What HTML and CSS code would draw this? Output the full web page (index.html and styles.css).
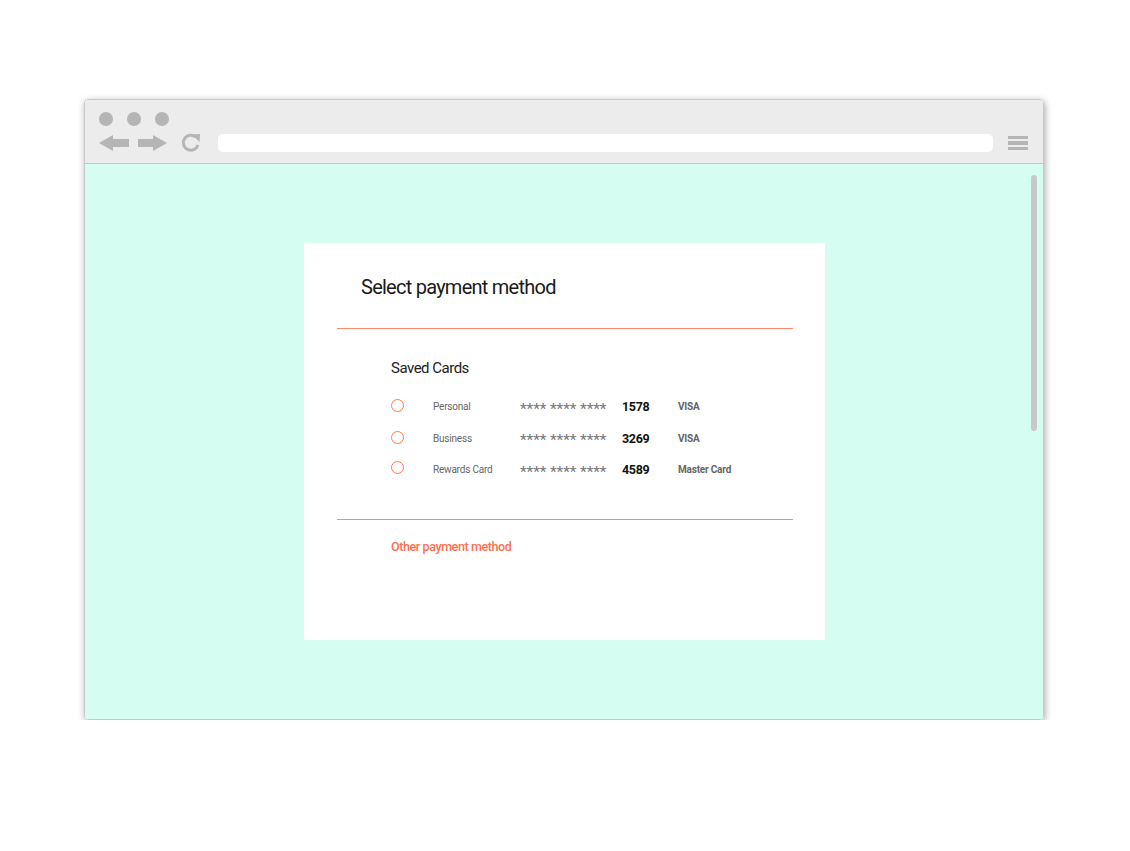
FILE: index.html
```html
<!DOCTYPE html>
<html>
<head>
<meta charset="utf-8">
<link rel="stylesheet" href="styles.css">
</head>
<body>
<div class="window">
  <div class="toolbar">
    <div class="dots"><span class="dot"></span><span class="dot"></span><span class="dot"></span></div>
    <div class="navrow">
      <svg class="nav" width="110" height="22" viewBox="0 0 110 22">
        <polygon points="0,10 14,2 14,6 30,6 30,14 14,14 14,18" fill="#b5b5b5" transform="translate(0,1)"/>
        <polygon points="68,10 54,2 54,6 39,6 39,14 54,14 54,18" fill="#b5b5b5" transform="translate(0,1)"/>
        <path d="M97 5.2 A7.5 7.5 0 1 0 99 13" fill="none" stroke="#b5b5b5" stroke-width="3"/>
        <polygon points="93,2.5 101,2 100.5,10" fill="#b5b5b5"/>
      </svg>
      <div class="address"></div>
      <div class="menu"><span></span><span></span><span></span></div>
    </div>
  </div>
  <div class="viewport">
    <div class="card">
      <h1 class="title">Select payment method</h1>
      <div class="rule"></div>
      <div class="saved">
        <h2 class="subtitle">Saved Cards</h2>
        <div class="row"><span class="radio"></span><span class="label">Personal</span><span class="stars">**** **** ****</span><span class="num">1578</span><span class="brand">VISA</span></div>
        <div class="row"><span class="radio"></span><span class="label">Business</span><span class="stars">**** **** ****</span><span class="num">3269</span><span class="brand">VISA</span></div>
        <div class="row"><span class="radio"></span><span class="label">Rewards Card</span><span class="stars">**** **** ****</span><span class="num">4589</span><span class="brand">Master Card</span></div>
      </div>
      <div class="rule rule2"></div>
      <a class="other">Other payment method</a>
    </div>
    <div class="scrollbar"></div>
  </div>
</div>
</body>
</html>
```

FILE: styles.css
```css
html, body { margin: 0; padding: 0; background: #fff; }
body {
  font-family: "Roboto", "Liberation Sans", sans-serif;
  padding: 99px 0 0 84px;
}
.window {
  width: 960px;
  height: 621px;
  box-sizing: border-box;
  border: 1px solid #c9c9c9;
  border-radius: 4px;
  overflow: hidden;
  box-shadow: 1px 2px 7px rgba(0,0,0,0.35);
  display: flex;
  flex-direction: column;
}
.toolbar {
  height: 64px;
  box-sizing: border-box;
  background: #ececec;
  border-bottom: 1px solid #c8c8c8;
  padding: 12px 0 0 14px;
}
.dots { display: flex; gap: 14px; height: 14px; }
.dot { width: 14px; height: 14px; border-radius: 50%; background: #b5b5b5; }
.navrow { display: flex; align-items: center; margin-top: 6px; height: 22px; }
.nav { display: block; }
.address {
  width: 775px; height: 18px; background: #fff; border-radius: 5px; margin-left: 9px;
}
.menu { margin-left: 15px; width: 20px; display: flex; flex-direction: column; gap: 2px; }
.menu span { height: 3.5px; background: #b5b5b5; display: block; }
.viewport {
  flex: 1;
  background: #d5fdf2;
  position: relative;
  padding: 79px 0 0 219px;
}
.scrollbar {
  position: absolute; right: 6px; top: 11px; width: 6px; height: 256px;
  background: #c8c8c8; border-radius: 3px;
}
.card {
  width: 521px; height: 397px; background: #fff; box-sizing: border-box;
  padding: 29px 32px 0 33px;
}
.title {
  margin: 0 0 0 24px; font-weight: 400; font-size: 20px; color: #1a1a1a;
  line-height: 30px; letter-spacing: -0.75px;
}
.rule { height: 1px; background: #ff8a6e; margin-top: 26px; }
.saved { padding-left: 54px; padding-top: 29px; }
.subtitle { margin: 0; font-weight: 400; font-size: 15px; color: #222; line-height: 20px; letter-spacing: -0.5px; }
.row { display: flex; align-items: center; height: 31.5px; }
.row:first-of-type { margin-top: 13px; }
.radio {
  width: 11px; height: 11px; border: 1.8px solid #ff7a5a; border-radius: 50%; flex: none;
  position: relative; top: -1px;
}
.row:nth-of-type(3) .radio { top: -2.5px; }
.row:nth-of-type(4) .radio { top: -4px; }
.label { font-size: 10px; color: #666; margin-left: 29px; width: 87px; letter-spacing: -0.2px; }
.stars { font-size: 15.5px; color: #777; width: 102px; letter-spacing: -0.1px; position: relative; top: 2px; }
.num { font-size: 12.5px; font-weight: 700; color: #111; width: 56px; letter-spacing: -0.3px; }
.brand { font-size: 10px; font-weight: 700; color: #666; letter-spacing: -0.2px; }
.rule2 { margin-top: 33px; }
.other {
  display: block; margin: 19px 0 0 54px; color: #ff6f4f; font-size: 12.5px; font-weight: 500; letter-spacing: -0.4px;
}
```
